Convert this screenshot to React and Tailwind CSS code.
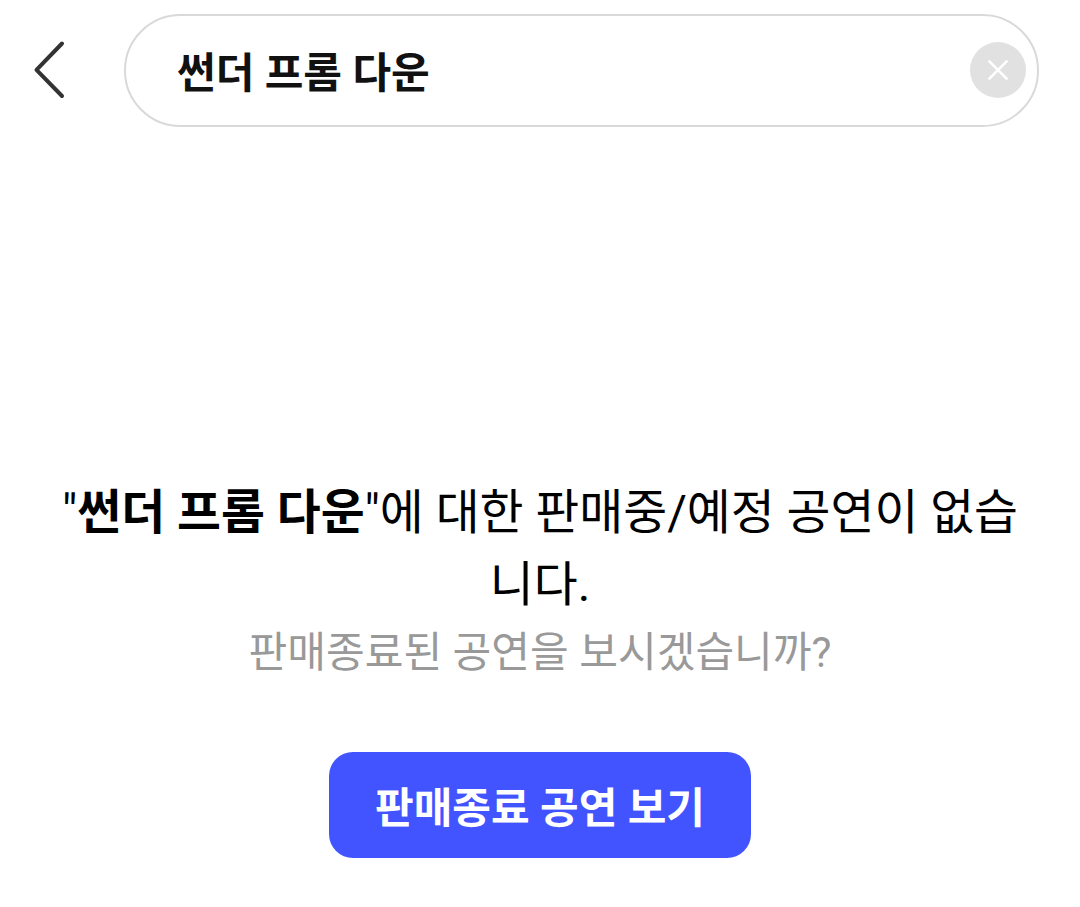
import React, {useState} from 'react';

function SearchHeader({value, onChange}) {
  return (
    <header className="flex items-center pt-[14px] pl-[32px] pr-[41px]">
      <button className="w-[34px] h-[60px] mr-[58px] mb-[2px] shrink-0" aria-label="뒤로">
        <svg viewBox="0 0 34 60" className="w-[34px] h-[60px]" fill="none">
          <path
            d="M30 3.5 L4.5 29.8 L30 56"
            stroke="#333333"
            strokeWidth="4"
            strokeLinecap="round"
            strokeLinejoin="round"
          />
        </svg>
      </button>
      <div className="flex items-center flex-1 h-[113px] border-2 border-[#d9d9d9] rounded-full pl-[51px] pr-[11px]">
        <div className="flex-1 pt-[6px] text-[42px] leading-[60px] font-bold text-[#111111] whitespace-nowrap">
          {value}
        </div>
        <button
          className="flex items-center justify-center w-[56px] h-[56px] mb-[2px] rounded-full bg-[#e1e1e1] cursor-pointer"
          aria-label="지우기"
          onClick={() => onChange('')}
        >
          <svg viewBox="0 0 20 20" className="w-[20px] h-[20px]" fill="none">
            <path
              d="M1.4 1.4 L18.6 18.6 M18.6 1.4 L1.4 18.6"
              stroke="#ffffff"
              strokeWidth="2.6"
              strokeLinecap="round"
            />
          </svg>
        </button>
      </div>
    </header>
  );
}

export default function App() {
  const [keyword, setKeyword] = useState('썬더 프롬 다운');

  return (
    <div className="w-[1080px] h-[907px] overflow-hidden bg-white font-['Roboto','Noto_Sans_CJK_KR',sans-serif]">
      <SearchHeader value={keyword} onChange={setKeyword} />
      <main className="flex flex-col items-center pt-[350px] text-center">
        <p className="text-[47.75px] leading-[72px] text-black">
          "<strong className="font-bold">{keyword}</strong>"에 대한 판매중/예정 공연이 없습
          <br />
          니다.
        </p>
        <p className="mt-px text-[42.1px] leading-[62px] text-[#999999]">
          판매종료된 공연을 보시겠습니까?
        </p>
        <button className="mt-[68px] w-[422px] h-[106px] pt-[6px] rounded-[24px] bg-[#4154ff] text-white text-[42px] font-bold cursor-pointer">
          판매종료 공연 보기
        </button>
      </main>
    </div>
  );
}
